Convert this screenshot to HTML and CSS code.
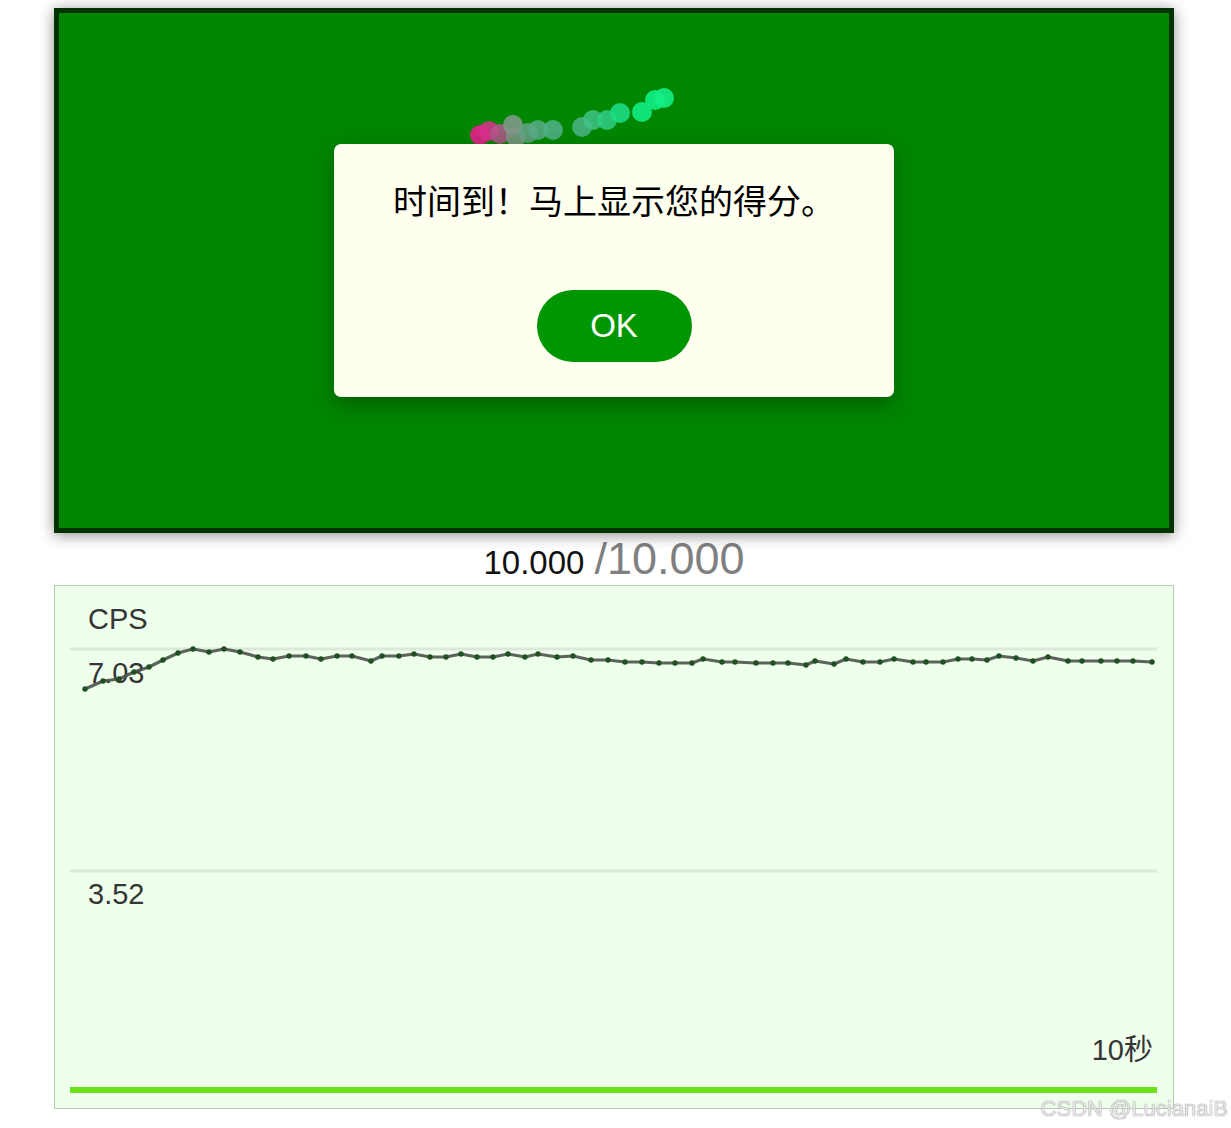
FILE: index.html
```html
<!DOCTYPE html>
<html lang="zh">
<head>
<meta charset="utf-8">
<title>CPS</title>
<link rel="stylesheet" href="styles.css">
</head>
<body>
<div class="page">
  <div class="game">
    <svg class="trail" width="1110" height="515" viewBox="0 0 1110 515">
      <circle cx="421" cy="122" r="10" fill="#e81f8a" opacity="0.9"/>
      <circle cx="430" cy="118" r="10" fill="#d8308e" opacity="0.85"/>
      <circle cx="441" cy="121" r="10" fill="#b4568c" opacity="0.85"/>
      <circle cx="454" cy="112" r="10" fill="#7e9a8a" opacity="0.9"/>
      <circle cx="457" cy="124" r="10" fill="#84948a" opacity="0.85"/>
      <circle cx="469" cy="120" r="10" fill="#66a286" opacity="0.85"/>
      <circle cx="479" cy="117" r="10" fill="#58aa86" opacity="0.85"/>
      <circle cx="494" cy="117" r="10" fill="#52b088" opacity="0.85"/>
      <circle cx="523" cy="114" r="10" fill="#4cb486" opacity="0.85"/>
      <circle cx="534" cy="107" r="10" fill="#40c284" opacity="0.85"/>
      <circle cx="548" cy="107" r="10" fill="#30cc84" opacity="0.85"/>
      <circle cx="561" cy="100" r="10" fill="#1edc84" opacity="0.9"/>
      <circle cx="583" cy="99" r="10" fill="#12ec84" opacity="0.9"/>
      <circle cx="596" cy="87" r="10" fill="#12ee84" opacity="0.9"/>
      <circle cx="605" cy="85" r="10" fill="#14ee86" opacity="0.9"/>
    </svg>
    <div class="dialog">
      <p class="dialog-text">时间到！马上显示您的得分。</p>
      <button class="ok-btn">OK</button>
    </div>
  </div>
  <div class="score"><span class="score-now">10.000</span><span class="score-total">/10.000</span></div>
  <div class="chart">
    <svg class="chart-svg" width="1118" height="522" viewBox="0 0 1118 522">
      <defs>
        <marker id="dot" markerWidth="6" markerHeight="6" refX="3" refY="3" markerUnits="userSpaceOnUse">
          <circle cx="3" cy="3" r="2.7" fill="#1f4f22"/>
        </marker>
      </defs>
      <line x1="15" y1="63" x2="1102" y2="63" stroke="#dce9da" stroke-width="3"/>
      <line x1="15" y1="285" x2="1102" y2="285" stroke="#dce9da" stroke-width="3"/>
      <text x="33" y="43" class="lbl">CPS</text>
      <text x="33" y="97" class="lbl">7.03</text>
      <text x="33" y="318" class="lbl">3.52</text>
      <text x="1098" y="474" class="lbl" text-anchor="end">10秒</text>
      <polyline class="cps-line" marker-start="url(#dot)" marker-mid="url(#dot)" marker-end="url(#dot)"
        points="30,103 48,95 64,93 79,86 94,81 108,74 123,67 138,63 154,66 169,63 185,66 203,71 218,73 234,70 251,70 266,73 282,70 297,70 316,75 327,70 344,70 359,68 375,71 391,71 406,68 422,71 438,71 453,68 470,71 483,68 502,71 518,70 536,74 553,74 570,76 587,76 604,77 620,77 637,77 648,73 667,76 680,76 701,77 718,77 733,77 751,79 760,75 779,78 791,73 808,76 825,76 839,73 858,76 871,76 888,76 903,73 917,73 932,74 944,70 961,72 978,75 993,71 1013,75 1027,75 1046,75 1062,75 1078,75 1097,76"/>
      <rect x="15" y="501" width="1087" height="6" fill="#6ce21a"/>
    </svg>
  </div>
</div>
<div class="watermark">CSDN @LucianaiB</div>
</body>
</html>
```

FILE: styles.css
```css
html, body {
  margin: 0;
  padding: 0;
  background: #ffffff;
}

body {
  padding: 8px 0 0 0;
  font-family: "Liberation Sans", Arial, "Noto Sans CJK SC", sans-serif;
}

.page {
  width: 1120px;
  margin-left: 54px;
}

.game {
  position: relative;
  width: 1110px;
  height: 515px;
  background: #008600;
  border: 5px solid #003300;
  box-shadow: 0 2px 14px rgba(0, 0, 0, 0.45);
  display: flex;
  align-items: center;
  justify-content: center;
}

.trail {
  position: absolute;
  left: 0;
  top: 0;
}

.dialog {
  position: relative;
  width: 560px;
  height: 253px;
  box-sizing: border-box;
  background: #fffff0;
  border-radius: 7px;
  box-shadow: 0 8px 20px rgba(0, 30, 0, 0.35);
  padding: 35px 0 35px;
  display: flex;
  flex-direction: column;
  align-items: center;
}

.dialog-text {
  margin: 0;
  font-family: "Noto Sans CJK SC", sans-serif;
  font-size: 34px;
  line-height: 42px;
  color: #000;
}

.ok-btn {
  margin-top: 69px;
  width: 155px;
  height: 72px;
  border: none;
  border-radius: 36px;
  background: #009600;
  color: #ffffff;
  font-family: "Liberation Sans", Arial, sans-serif;
  font-size: 33px;
  padding: 0;
}

.score {
  text-align: center;
  height: 52px;
  line-height: 52px;
  white-space: nowrap;
}

.score-now {
  font-size: 33px;
  color: #111;
  margin-right: 10px;
}

.score-total {
  font-size: 45px;
  color: #808080;
}

.chart {
  width: 1118px;
  height: 522px;
  border: 1px solid #b3cdb1;
  background: #eeffeb;
}

.chart-svg {
  display: block;
}

.lbl {
  font-family: "Liberation Sans", Arial, "Noto Sans CJK SC", sans-serif;
  font-size: 29px;
  fill: #353535;
}

.cps-line {
  fill: none;
  stroke: #4a524a;
  stroke-opacity: 0.9;
  stroke-width: 3.2;
  stroke-linejoin: round;
}

.watermark {
  position: fixed;
  right: 3px;
  bottom: 6px;
  font-family: "Liberation Sans", Arial, sans-serif;
  font-size: 22px;
  color: #e6e6e6;
  text-shadow: 0 0 1px #8c8c8c, 0 0 1px #8c8c8c;
}
```
